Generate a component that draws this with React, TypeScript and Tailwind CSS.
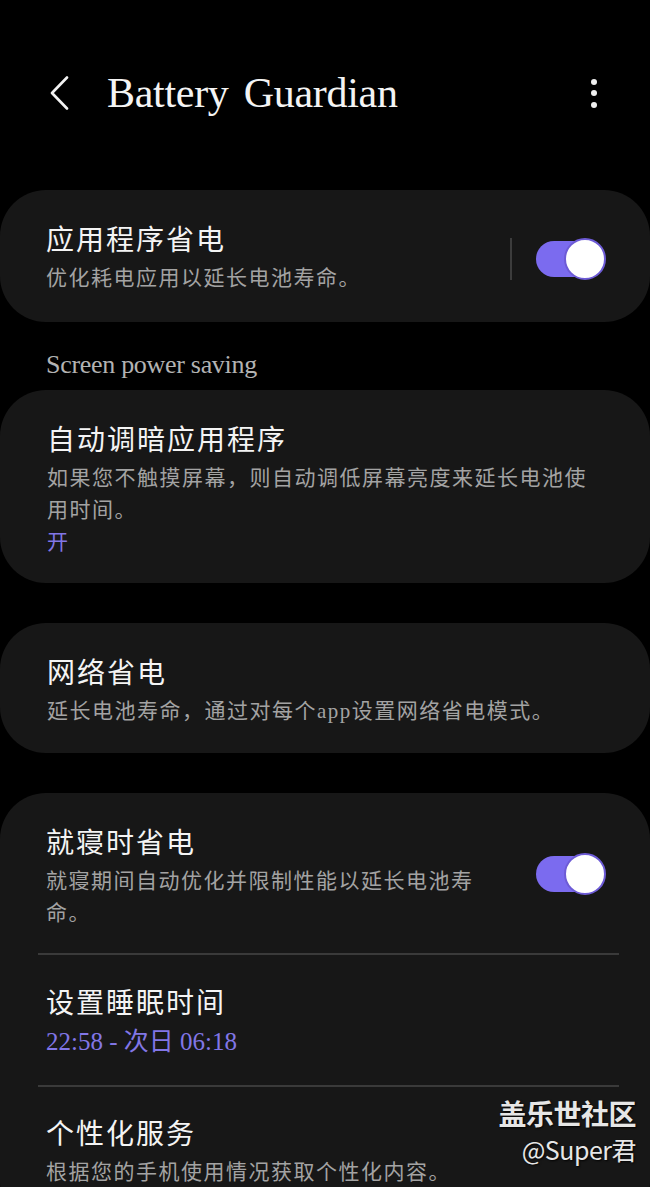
const serif = "font-['Liberation_Serif','Noto_Sans_CJK_SC',serif]";

function Toggle() {
  return (
    <div className="relative h-[42px] w-[70px] shrink-0">
      <div className="absolute left-0 top-[3px] h-[36px] w-[60px] rounded-full bg-[#7b6bef]" />
      <div className="absolute right-0 top-0 h-[42px] w-[42px] rounded-full border-2 border-[#6d5bd6] bg-white" />
    </div>
  );
}

function Title({ children }: { children: React.ReactNode }) {
  return <div className="text-[28px] leading-[36px] tracking-[2px] text-[#f4f4f4]">{children}</div>;
}

function Sub({ children, className = "" }: { children: React.ReactNode; className?: string }) {
  return (
    <div className={"mt-[3px] text-[21px] leading-[32px] tracking-[1.5px] text-[#a3a3a3] " + className}>
      {children}
    </div>
  );
}

export default function App() {
  return (
    <div className={"relative h-[1187px] w-[650px] overflow-hidden bg-black " + serif}>
      {/* header */}
      <div className="h-[190px] pt-[63px]">
        <div className="flex h-[60px] items-center pl-[50px] pr-[50px]">
          <svg width="19" height="34" viewBox="0 0 19 34" fill="none" className="shrink-0">
            <polyline points="17,1.5 2,17 17,32.5" stroke="#f2f2f2" strokeWidth="2.6" strokeLinecap="round" strokeLinejoin="round" />
          </svg>
          <div className="ml-[38px] text-[42px] leading-[60px] tracking-[-0.3px] [word-spacing:5px] text-[#f4f4f4]">
            Battery Guardian
          </div>
          <div className="ml-auto flex flex-col items-center gap-[5.5px] pr-[3px]">
            <span className="h-[6px] w-[6px] rounded-full bg-[#f0f0f0]" />
            <span className="h-[6px] w-[6px] rounded-full bg-[#f0f0f0]" />
            <span className="h-[6px] w-[6px] rounded-full bg-[#f0f0f0]" />
          </div>
        </div>
      </div>

      {/* card 1 */}
      <div className="flex items-center rounded-[46px] bg-[#171717] pb-[28px] pl-[46px] pr-[44px] pt-[33px]">
        <div className="flex-1">
          <Title>应用程序省电</Title>
          <Sub>优化耗电应用以延长电池寿命。</Sub>
        </div>
        <div className="mr-[24px] h-[42px] w-[2px] bg-[#3c3c3c]" />
        <Toggle />
      </div>

      <div className="mb-[9px] mt-[27px] pl-[46px] text-[26px] leading-[32px] tracking-[-0.3px] text-[#b3b3b3]">
        Screen power saving
      </div>

      {/* card 2 */}
      <div className="rounded-[46px] bg-[#171717] pb-[25px] pl-[47px] pt-[33px]">
        <Title>自动调暗应用程序</Title>
        <Sub className="w-[552px]">如果您不触摸屏幕，则自动调低屏幕亮度来延长电池使用时间。</Sub>
        <div className="text-[21px] leading-[32px] text-[#8276e6]">开</div>
      </div>

      {/* card 3 */}
      <div className="mt-[40px] rounded-[46px] bg-[#171717] pb-[26px] pl-[47px] pt-[33px]">
        <Title>网络省电</Title>
        <Sub>延长电池寿命，通过对每个app设置网络省电模式。</Sub>
      </div>

      {/* card 4 */}
      <div className="mt-[40px] rounded-[46px] bg-[#171717] pb-[40px] pt-[33px]">
        <div className="flex items-start pl-[46px] pr-[44px]">
          <div className="w-[440px]">
            <Title>就寝时省电</Title>
            <Sub>就寝期间自动优化并限制性能以延长电池寿命。</Sub>
          </div>
          <div className="ml-auto mt-[27px]">
            <Toggle />
          </div>
        </div>
        <div className="ml-[38px] mr-[31px] mt-[24px] h-[2px] bg-[#3a3a3a]" />
        <div className="pl-[46px] pt-[31px]">
          <Title>设置睡眠时间</Title>
          <div className="mt-[4px] text-[25px] leading-[32px] text-[#8276e6]">22:58 - 次日 06:18</div>
        </div>
        <div className="ml-[38px] mr-[31px] mt-[27px] h-[2px] bg-[#3a3a3a]" />
        <div className="pl-[46px] pt-[30px]">
          <Title>个性化服务</Title>
          <Sub>根据您的手机使用情况获取个性化内容。</Sub>
        </div>
      </div>

      {/* watermark */}
      <div className="absolute right-[14px] top-[1094px] flex flex-col items-end font-['Noto_Sans_CJK_SC',sans-serif] text-[#e6e6e6] [text-shadow:1px_1px_2px_rgba(0,0,0,0.9)]">
        <div className="text-[28px] font-bold leading-[38px] tracking-[-0.5px]">盖乐世社区</div>
        <div className="text-[25px] leading-[34px] tracking-[-0.5px]">@Super君</div>
      </div>
    </div>
  );
}
